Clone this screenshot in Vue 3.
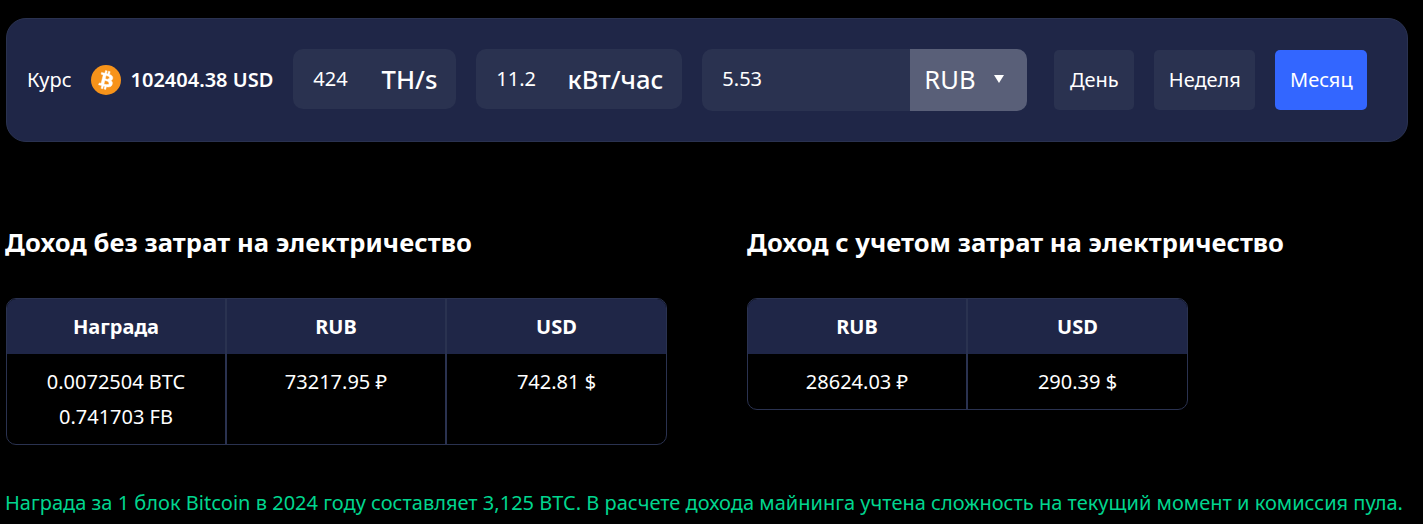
<script setup>
import { ref } from 'vue'

const hashrate = ref('424')
const power = ref('11.2')
const tariff = ref('5.53')
const periods = ['День', 'Неделя', 'Месяц']
const period = ref('Месяц')
</script>

<template>
  <main class="page">
    <section class="panel">
      <span class="label">Курс</span>
      <svg class="coin" viewBox="0 0 32 32" aria-hidden="true">
        <circle cx="16" cy="16" r="16" fill="#f7931a" />
        <path fill="#fff" stroke="#fff" stroke-width=".5" d="M23.19 14.02c.32-2.12-1.3-3.26-3.5-4.02l.72-2.87-1.75-.44-.7 2.8c-.46-.12-.93-.23-1.4-.34l.7-2.81-1.74-.44-.72 2.87c-.38-.09-.75-.17-1.11-.26l-2.41-.6-.46 1.87s1.3.3 1.27.31c.71.18.84.65.82 1.02l-.82 3.27c.05.01.11.03.18.06l-.18-.05-1.14 4.58c-.09.22-.31.54-.81.42.02.03-1.27-.32-1.27-.32l-.87 2 2.27.57c.42.1.84.22 1.24.32l-.72 2.9 1.74.43.72-2.87c.48.13.94.25 1.39.36l-.71 2.86 1.75.44.72-2.9c2.98.57 5.23.34 6.17-2.36.76-2.17-.04-3.43-1.61-4.24 1.14-.26 2-1.01 2.23-2.56zm-4 5.6c-.54 2.18-4.21 1-5.4.7l.96-3.85c1.19.3 5 .89 4.44 3.15zm.54-5.63c-.5 1.98-3.55.98-4.54.73l.87-3.49c.99.25 4.18.71 3.67 2.76z" />
      </svg>
      <strong class="price">102404.38 USD</strong>

      <label class="field field-hash">
        <input v-model="hashrate" class="field-input" />
        <span class="unit">TH/s</span>
      </label>
      <label class="field field-power">
        <input v-model="power" class="field-input" />
        <span class="unit">кВт/час</span>
      </label>
      <div class="field field-tariff">
        <input v-model="tariff" class="field-input" />
        <button type="button" class="currency">
          <span>RUB</span>
          <i class="caret"></i>
        </button>
      </div>

      <div class="periods">
        <button
          v-for="p in periods"
          :key="p"
          type="button"
          class="period"
          :class="{ active: p === period }"
          @click="period = p"
        >{{ p }}</button>
      </div>
    </section>

    <section class="results">
      <div class="result result-left">
        <h2>Доход без затрат на электричество</h2>
        <div class="table table-wide">
          <div class="row head">
            <div class="cell">Награда</div>
            <div class="cell">RUB</div>
            <div class="cell">USD</div>
          </div>
          <div class="row">
            <div class="cell">
              <div>0.0072504 BTC</div>
              <div>0.741703 FB</div>
            </div>
            <div class="cell">73217.95 ₽</div>
            <div class="cell">742.81 $</div>
          </div>
        </div>
      </div>
      <div class="result">
        <h2>Доход с учетом затрат на электричество</h2>
        <div class="table table-narrow">
          <div class="row head">
            <div class="cell">RUB</div>
            <div class="cell">USD</div>
          </div>
          <div class="row">
            <div class="cell">28624.03 ₽</div>
            <div class="cell">290.39 $</div>
          </div>
        </div>
      </div>
    </section>

    <p class="note">Награда за 1 блок Bitcoin в 2024 году составляет 3,125 BTC. В расчете дохода майнинга учтена сложность на текущий момент и комиссия пула.</p>
  </main>
</template>

<style>
html, body {
  margin: 0;
  background: #000;
}
</style>

<style scoped>
.page {
  height: 524px;
  overflow: hidden;
  padding: 18px 15px 0 6px;
  box-sizing: border-box;
  background: #000;
  color: #fff;
  font-family: "Noto Sans", sans-serif;
  font-size: 20px;
}
.panel {
  display: flex;
  align-items: center;
  height: 124px;
  box-sizing: border-box;
  padding: 0 19px 0 20px;
  background: #1f2647;
  border: 1px solid #2a3250;
  border-radius: 20px;
}
.label {
  line-height: 24px;
}
.coin {
  width: 30px;
  height: 30px;
  margin-left: 19px;
  flex: none;
}
.price {
  margin-left: 10px;
  font-weight: 600;
  line-height: 24px;
  white-space: nowrap;
}
.field {
  display: flex;
  align-items: center;
  height: 60px;
  box-sizing: border-box;
  padding: 0 20px;
  background: #2a3250;
  border-radius: 10px;
  overflow: hidden;
}
.field-hash {
  width: 163px;
  margin: 0 0 2px 20px;
}
.field-power {
  width: 206px;
  margin: 0 0 2px 20px;
}
.field-tariff {
  width: 325px;
  height: 62px;
  margin-left: 20px;
  padding: 0 0 0 20px;
}
.field-input {
  flex: 1 1 0;
  min-width: 0;
  padding: 0 0 2px;
  border: 0;
  outline: 0;
  background: transparent;
  color: #fff;
  font: inherit;
}
.field-tariff .field-input {
  padding-bottom: 4px;
}
.unit {
  font-size: 25.6px;
  font-weight: 500;
  margin-right: -1px;
  white-space: nowrap;
}
.currency {
  display: flex;
  align-items: center;
  width: 117px;
  height: 100%;
  flex: none;
  margin-left: -1px;
  padding: 0 0 2px 14px;
  border: 0;
  background: #595f78;
  color: #fff;
  font-family: inherit;
  font-size: 25.6px;
}
.caret {
  width: 0;
  height: 0;
  margin: 0 0 0 18px;
  border-left: 5px solid transparent;
  border-right: 5px solid transparent;
  border-top: 8px solid #fff;
}
.periods {
  display: flex;
  gap: 20px;
  margin-left: 27px;
}
.period {
  height: 60px;
  width: 80px;
  padding: 0 0 2px;
  border: 0;
  border-radius: 5px;
  background: #2a3250;
  color: #fff;
  font-family: inherit;
  font-size: 20px;
}
.period:nth-child(2) {
  width: 101px;
}
.period:nth-child(3) {
  width: 92px;
}
.period.active {
  background: #3366ff;
}
.results {
  display: flex;
  margin-top: 83px;
}
.result-left {
  width: 741px;
}
h2 {
  margin: 0 0 37px;
  font-size: 25.6px;
  font-weight: 700;
  line-height: 36px;
  letter-spacing: 0.02px;
  white-space: nowrap;
}
.result-left h2 {
  margin-left: -1px;
  letter-spacing: 0.07px;
}
.table {
  box-sizing: border-box;
  border: 1px solid #2a3250;
  border-radius: 10px;
  overflow: hidden;
}
.table-wide {
  width: 661px;
}
.table-narrow {
  width: 441px;
}
.row {
  display: flex;
}
.cell {
  width: 220px;
  box-sizing: border-box;
  padding: 10px;
  border-left: 2px solid #2a3250;
  text-align: center;
  line-height: 35px;
}
.cell:first-child {
  width: 218px;
  border-left: 0;
}
.cell:last-child {
  flex: 1;
}
.head {
  background: #1f2647;
  font-weight: 700;
}
.head .cell {
  height: 55px;
}
.note {
  margin: 0 0 0 -1px;
  padding-top: 44px;
  color: #00d68f;
  line-height: 27px;
  letter-spacing: 0.012px;
  white-space: nowrap;
}
</style>
